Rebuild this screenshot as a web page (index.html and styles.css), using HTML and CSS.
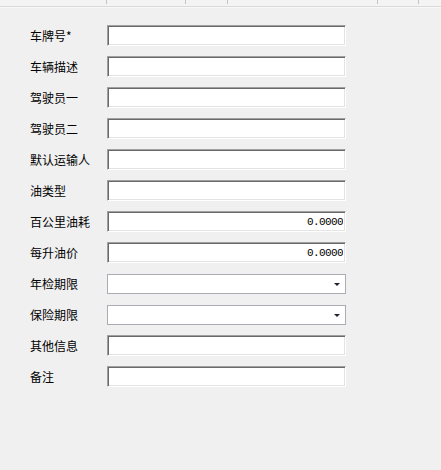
FILE: index.html
```html
<!DOCTYPE html>
<html lang="zh-CN">
<head>
    <meta charset="UTF-8">
    <title>车辆信息</title>
    <link rel="stylesheet" href="styles.css">
</head>
<body>
    <div class="header-strip">
        <span class="cell" style="width: 107px;"></span>
        <span class="cell" style="width: 79px;"></span>
        <span class="cell" style="width: 42px;"></span>
        <span class="cell" style="width: 150px;"></span>
        <span class="cell" style="width: 41px;"></span>
        <span class="cell"></span>
    </div>

    <form class="vehicle-form">
        <label>车牌号*</label>
        <input type="text" class="field">

        <label>车辆描述</label>
        <input type="text" class="field">

        <label>驾驶员一</label>
        <input type="text" class="field">

        <label>驾驶员二</label>
        <input type="text" class="field">

        <label>默认运输人</label>
        <input type="text" class="field">

        <label>油类型</label>
        <input type="text" class="field">

        <label>百公里油耗</label>
        <input type="text" class="field number" value="0.0000">

        <label>每升油价</label>
        <input type="text" class="field number" value="0.0000">

        <label>年检期限</label>
        <div class="combo"><span class="arrow"></span></div>

        <label>保险期限</label>
        <div class="combo"><span class="arrow"></span></div>

        <label>其他信息</label>
        <input type="text" class="field">

        <label>备注</label>
        <input type="text" class="field">
    </form>
</body>
</html>
```

FILE: styles.css
```css
body {
    margin: 0;
    background-color: #f0f0f0;
    font-family: "Noto Sans CJK SC", "Liberation Sans", sans-serif;
    font-size: 12px;
    color: #000;
    height: 470px;
}

.header-strip {
    display: flex;
    height: 6px;
    background-color: #f4f4f4;
    border-bottom: 1px solid #dadada;
    box-shadow: 0 1px 0 #f8f8f8;
}

.cell {
    height: 4px;
    border-right: 1px solid #c4c4c4;
    box-sizing: border-box;
}

.cell:last-child {
    border-right: none;
}

.vehicle-form {
    display: grid;
    grid-template-columns: 77px 239px;
    grid-auto-rows: 21px;
    row-gap: 10px;
    padding-left: 30px;
    margin-top: 18px;
    align-items: center;
}

label {
    line-height: 21px;
    white-space: nowrap;
}

.field {
    width: 239px;
    height: 21px;
    margin: 0;
    box-sizing: border-box;
    background-color: #fff;
    border-style: solid;
    border-width: 1px;
    border-color: #a0a0a0 #fff #fff #a0a0a0;
    box-shadow: inset 1px 1px 0 #696969, inset -1px -1px 0 #e3e3e3;
    padding: 0 2px 0 3px;
    font-family: "Liberation Mono", monospace;
    font-size: 11px;
    letter-spacing: -0.6px;
    color: #000;
    outline: none;
}

.number {
    text-align: right;
}

.combo {
    position: relative;
    width: 239px;
    height: 20px;
    box-sizing: border-box;
    background-color: #fff;
    border: 1px solid #ababb4;
}

.arrow {
    position: absolute;
    right: 5px;
    top: 8px;
    width: 0;
    height: 0;
    border-left: 3px solid transparent;
    border-right: 3px solid transparent;
    border-top: 3px solid #20202e;
}
```
